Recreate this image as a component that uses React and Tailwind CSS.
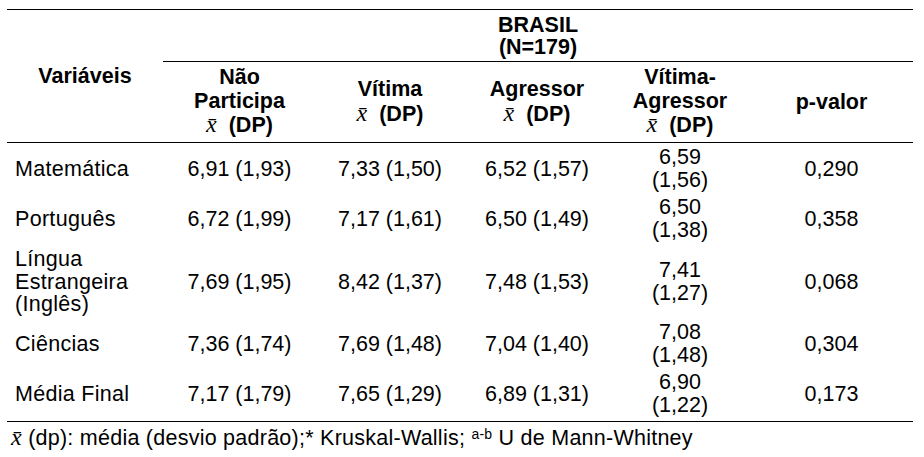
import React from "react";

const XB = () => (
  <span className="font-['Liberation_Serif',serif] italic font-normal text-[24px]">{"x\u0304"}</span>
);

const rows = [
  { label: ["Matemática"], v: ["6,91 (1,93)", "7,33 (1,50)", "6,52 (1,57)"], va: ["6,59", "(1,56)"], p: "0,290", h: "h-[52px]" },
  { label: ["Português"], v: ["6,72 (1,99)", "7,17 (1,61)", "6,50 (1,49)"], va: ["6,50", "(1,38)"], p: "0,358", h: "h-[49px]" },
  { label: ["Língua", "Estrangeira", "(Inglês)"], v: ["7,69 (1,95)", "8,42 (1,37)", "7,48 (1,53)"], va: ["7,41", "(1,27)"], p: "0,068", h: "h-[77px]" },
  { label: ["Ciências"], v: ["7,36 (1,74)", "7,69 (1,48)", "7,04 (1,40)"], va: ["7,08", "(1,48)"], p: "0,304", h: "h-[47px]" },
  { label: ["Média Final"], v: ["7,17 (1,79)", "7,65 (1,29)", "6,89 (1,31)"], va: ["6,90", "(1,22)"], p: "0,173", h: "h-[54px]" },
];

export default function App() {
  return (
    <div className="w-[924px] h-[457px] bg-white text-black font-['Liberation_Sans',Arial,sans-serif] text-[21.5px] leading-[22px] pt-[9px] pl-[7px] overflow-hidden">
      <table className="table-fixed border-collapse w-[906px]">
        <colgroup>
          <col className="w-[156px]" />
          <col className="w-[153px]" />
          <col className="w-[148px]" />
          <col className="w-[146px]" />
          <col className="w-[140px]" />
          <col className="w-[163px]" />
        </colgroup>
        <thead>
          <tr className="h-[52px] border-t border-black">
            <th rowSpan={2} className="align-middle text-center font-bold p-0 border-b border-black">
              Variáveis
            </th>
            <th colSpan={5} className="align-middle text-center font-bold p-0 border-b border-black">
              <div>BRASIL</div>
              <div>(N=179)</div>
            </th>
          </tr>
          <tr className="h-[81px] border-b border-black">
            <th className="align-middle text-center font-bold p-0 leading-[23.5px]">
              <div>Não</div>
              <div>Participa</div>
              <div><XB />&nbsp; (DP)</div>
            </th>
            <th className="align-middle text-center font-bold p-0 leading-[23.5px]">
              <div>Vítima</div>
              <div><XB />&nbsp; (DP)</div>
            </th>
            <th className="align-middle text-center font-bold p-0 leading-[23.5px]">
              <div>Agressor</div>
              <div><XB />&nbsp; (DP)</div>
            </th>
            <th className="align-middle text-center font-bold p-0 leading-[23.5px]">
              <div>Vítima-</div>
              <div>Agressor</div>
              <div><XB />&nbsp; (DP)</div>
            </th>
            <th className="align-middle text-center font-bold p-0">p-valor</th>
          </tr>
        </thead>
        <tbody className="border-b border-black">
          {rows.map((r, i) => (
            <tr key={i} className={r.h}>
              <td className="align-middle text-left p-0 pl-[8px] leading-[22.5px] tracking-[0.3px]">
                {r.label.map((l, j) => (
                  <div key={j}>{l}</div>
                ))}
              </td>
              {r.v.map((v, j) => (
                <td key={j} className="align-middle text-center p-0">{v}</td>
              ))}
              <td className="align-middle text-center p-0 leading-[23px]">
                <div>{r.va[0]}</div>
                <div>{r.va[1]}</div>
              </td>
              <td className="align-middle text-center p-0">{r.p}</td>
            </tr>
          ))}
        </tbody>
      </table>
      <div className="mt-[4px] pl-[4px] leading-[22px] whitespace-nowrap tracking-[0.25px]">
        <XB /> (dp): média (desvio padrão);* Kruskal-Wallis; <span className="text-[14px] relative -top-[6px]">a-b</span> U de Mann-Whitney
      </div>
    </div>
  );
}
